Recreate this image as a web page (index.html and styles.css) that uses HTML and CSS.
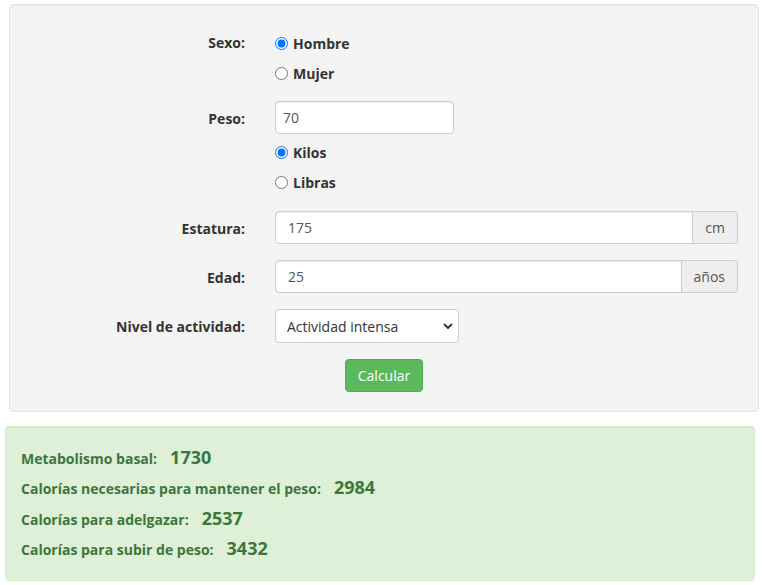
FILE: index.html
```html
<!DOCTYPE html>
<html lang="es">
<head>
<meta charset="utf-8">
<title>Calculadora de calorías</title>
<link rel="stylesheet" href="styles.css">
</head>
<body>
<form class="well">
  <div class="group group-radio">
    <label class="ctl-label">Sexo:</label>
    <div class="ctl">
      <label class="radio"><input type="radio" name="sexo" checked><span>Hombre</span></label>
      <label class="radio"><input type="radio" name="sexo"><span>Mujer</span></label>
    </div>
  </div>
  <div class="group group-peso">
    <label class="ctl-label field-label">Peso:</label>
    <div class="ctl">
      <input class="field field-peso" type="text" value="70">
      <div class="unit-radios">
        <label class="radio"><input type="radio" name="unidad" checked><span>Kilos</span></label>
        <label class="radio"><input type="radio" name="unidad"><span>Libras</span></label>
      </div>
    </div>
  </div>
  <div class="group group-input">
    <label class="ctl-label field-label">Estatura:</label>
    <div class="ctl input-group">
      <input class="field field-grow" type="text" value="175">
      <span class="addon">cm</span>
    </div>
  </div>
  <div class="group group-input">
    <label class="ctl-label field-label">Edad:</label>
    <div class="ctl input-group">
      <input class="field field-grow" type="text" value="25">
      <span class="addon">años</span>
    </div>
  </div>
  <div class="group group-input">
    <label class="ctl-label field-label">Nivel de actividad:</label>
    <div class="ctl">
      <div class="select-wrap">
        <select class="select">
          <option>Sedentario</option>
          <option>Actividad ligera</option>
          <option>Actividad moderada</option>
          <option selected>Actividad intensa</option>
          <option>Actividad muy intensa</option>
        </select>
        <svg class="chev" width="10" height="7" viewBox="0 0 10 7"><path d="M1.5 1.5 L5 5 L8.5 1.5" fill="none" stroke="#333" stroke-width="1.8" stroke-linecap="round" stroke-linejoin="round"/></svg>
      </div>
    </div>
  </div>
  <div class="actions">
    <button type="button" class="btn-success">Calcular</button>
  </div>
</form>
<div class="alert-success">
  <p class="res"><span class="res-label">Metabolismo basal:</span><span class="res-num">1730</span></p>
  <p class="res"><span class="res-label">Calorías necesarias para mantener el peso:</span><span class="res-num">2984</span></p>
  <p class="res"><span class="res-label">Calorías para adelgazar:</span><span class="res-num">2537</span></p>
  <p class="res"><span class="res-label">Calorías para subir de peso:</span><span class="res-num">3432</span></p>
</div>
</body>
</html>
```

FILE: styles.css
```css
* { box-sizing: border-box; }
html, body { margin: 0; padding: 0; background: #fff; }
body {
  font-family: "Open Sans", "Noto Sans", sans-serif;
  font-size: 14px;
  color: #333;
}
.well {
  width: 750px;
  margin: 4px 0 0 9px;
  padding: 23px 19px 19px;
  background: #f4f4f4;
  border: 1px solid #e3e3e3;
  border-radius: 4px;
  box-shadow: inset 0 1px 1px rgba(0,0,0,0.05);
}
.group {
  display: grid;
  grid-template-columns: 216px 463px;
  column-gap: 30px;
}
.ctl-label {
  font-weight: 700;
  text-align: right;
  color: #333;
}
.group-radio { margin-bottom: 13px; }
.group-radio .ctl-label { line-height: 30px; }
.group-peso { margin-bottom: 14px; }
.group-input { margin-bottom: 16px; }
.field-label {
  padding-top: 8px;
  line-height: 20px;
}
.radio {
  display: flex;
  align-items: center;
  height: 30px;
  font-weight: 700;
  color: #333;
  cursor: pointer;
}
.radio input {
  margin: 0 5px 0 0;
  width: 13px;
  height: 13px;
}
.unit-radios { margin-top: 3px; }
.field {
  height: 33px;
  border: 1px solid #ccc;
  border-radius: 4px;
  background: #fff;
  font-family: "Open Sans", "Noto Sans", sans-serif;
  font-size: 14px;
  color: #555;
  padding: 0 11px;
  box-shadow: inset 0 1px 1px rgba(0,0,0,0.075);
  outline: none;
}
.field-peso {
  display: block;
  width: 179px;
  padding: 0 7px;
}
.input-group { display: flex; }
.field-grow {
  flex: 1;
  min-width: 0;
  border-top-right-radius: 0;
  border-bottom-right-radius: 0;
  padding: 0 12px;
}
.addon {
  display: flex;
  align-items: center;
  height: 33px;
  padding: 0 12px;
  background: #eee;
  border: 1px solid #ccc;
  border-left: 0;
  border-radius: 0 4px 4px 0;
  color: #555;
}
.select-wrap {
  position: relative;
  width: 184px;
}
.select {
  appearance: none;
  -webkit-appearance: none;
  display: block;
  width: 184px;
  height: 34px;
  padding: 0 24px 0 11px;
  border: 1px solid #ccc;
  border-radius: 4px;
  background: #fff;
  font-family: "Open Sans", "Noto Sans", sans-serif;
  font-size: 14px;
  color: #333;
  outline: none;
}
.chev {
  position: absolute;
  right: 6px;
  top: 14px;
  pointer-events: none;
}
.actions {
  display: flex;
  justify-content: center;
}
.btn-success {
  height: 33px;
  padding: 0 12px;
  background: #5cb85c;
  border: 1px solid #4cae4c;
  border-radius: 4px;
  color: #fff;
  font-family: "Open Sans", "Noto Sans", sans-serif;
  font-size: 14px;
  cursor: pointer;
}
.alert-success {
  width: 750px;
  margin: 14px 0 0 5px;
  padding: 14.75px 15px 16px;
  background: #dff0d8;
  border: 1px solid #d6e9c6;
  border-radius: 4px;
  color: #3c763d;
}
.res {
  margin: 0;
  line-height: 30.5px;
  height: 30.5px;
}
.res-label {
  font-weight: 700;
  font-size: 14px;
}
.res-num {
  font-weight: 700;
  font-size: 18px;
  margin-left: 13px;
}
```
